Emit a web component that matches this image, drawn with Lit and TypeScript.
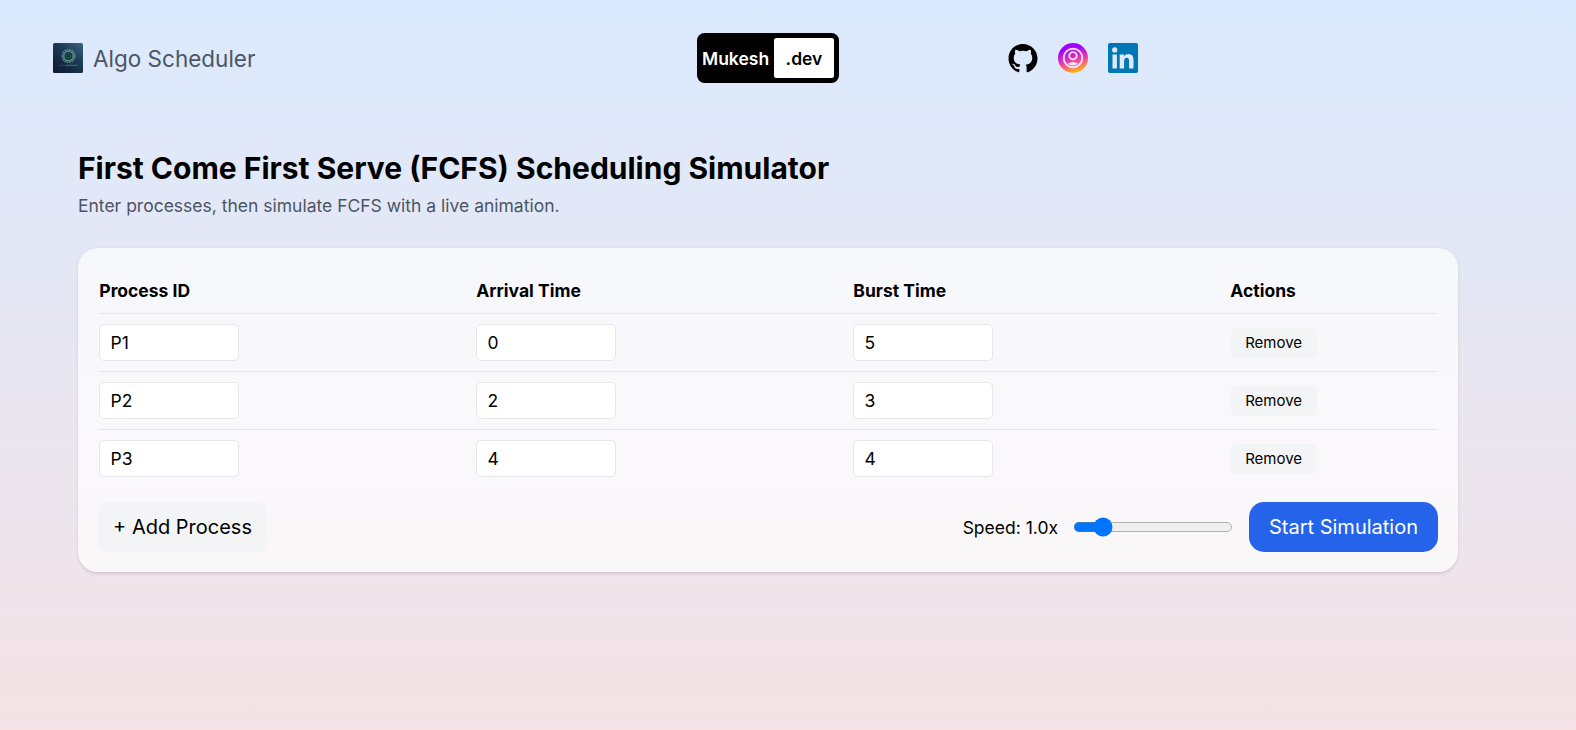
import { LitElement, html, css } from "lit";
import { customElement, state } from "lit/decorators.js";

interface Proc { id: string; arrival: number; burst: number; }

@customElement("app-header")
class AppHeader extends LitElement {
  static styles = css`
    :host { display: grid; grid-template-columns: 644px 310.5px 1fr; align-items: center; height: 50px; padding: 33px 53px 0; }
    .brand { display: flex; align-items: center; gap: 10px; font-size: 22.5px; color: #4b5563; }
    .badge { display: flex; box-sizing: border-box; width: 142px; height: 50px; padding: 5px; background: #000; border-radius: 7.5px; color: #fff; font-weight: 600; font-size: 17.5px; align-items: center; }
    .name { width: 72px; }
    .dev { flex: 1; box-sizing: border-box; height: 40px; padding-top: 1px; line-height: 40px; border-radius: 2.5px; background: #fff; color: #000; text-align: center; }
    .social { display: flex; gap: 20px; }
    svg { display: block; width: 30px; height: 30px; }
  `;
  render() {
    return html`
      <div class="brand">
        <svg viewBox="0 0 30 30">
          <defs><linearGradient id="lg" x1="1" y1="0" x2="0.2" y2="1"><stop offset="0" stop-color="#3f6482"/><stop offset=".45" stop-color="#1d3a55"/><stop offset="1" stop-color="#101b33"/></linearGradient></defs>
          <rect width="30" height="30" rx="1.6" fill="url(#lg)"/>
          <circle cx="15.5" cy="13" r="6.200" fill="none" stroke="#5b8f8c" stroke-width="1.8" stroke-dasharray="1.600 .84"/>
          <circle cx="15.5" cy="13" r="4.700" fill="#16343f" stroke="#5d938b" stroke-width="1.300"/>
          <circle cx="15.5" cy="13" r="2" fill="#0f2b33" stroke="#3f8578" stroke-width="1" stroke-dasharray="1.200 .8"/>
          <path d="M6 22.400h6" stroke="#294c5f" stroke-width=".8"/><path d="M12.500 22.400h12" stroke="#2f7a60" stroke-width="1.300" stroke-dasharray="1.400 .3"/>
        </svg>
        <span>Algo Scheduler</span>
      </div>
      <div class="badge"><span class="name">Mukesh</span><span class="dev">.dev</span></div>
      <div class="social">
        <svg viewBox="0 0 24 24"><path d="M12 .7C5.600.7.400 5.900.400 12.300c0 5.100 3.300 9.400 7.900 11 .6.100.8-.3.8-.6v-2c-3.200.7-3.900-1.600-3.900-1.600-.5-1.300-1.300-1.700-1.300-1.700-1-.7.100-.7.100-.7 1.200.1 1.800 1.200 1.800 1.200 1 1.800 2.700 1.300 3.400 1 .1-.8.400-1.300.7-1.600-2.600-.3-5.300-1.300-5.300-5.700 0-1.300.5-2.300 1.200-3.100-.1-.3-.5-1.500.1-3.100 0 0 1-.3 3.200 1.200a11 11 0 0 1 5.800 0c2.200-1.500 3.200-1.200 3.200-1.200.6 1.600.2 2.800.1 3.100.7.8 1.200 1.800 1.200 3.100 0 4.400-2.700 5.400-5.300 5.700.4.400.8 1.100.8 2.200v3.200c0 .3.200.7.800.6 4.600-1.500 7.900-5.900 7.900-11C23.600 5.900 18.400.7 12 .7z"/></svg>
        <svg viewBox="0 0 30 30">
          <defs><linearGradient id="ig" x1=".35" y1="0" x2=".65" y2="1"><stop offset=".2" stop-color="#a400ff"/><stop offset=".62" stop-color="#f0459a"/><stop offset="1" stop-color="#ffc400"/></linearGradient></defs>
          <circle cx="15" cy="15" r="15" fill="url(#ig)"/>
          <g fill="none" stroke="#fbe0fa" stroke-width="1.900"><circle cx="15" cy="15" r="9.300"/><circle cx="15" cy="12.800" r="3.700"/></g>
          <path d="M9.500 20.800q5.500-3.400 11 0-5.500 3.600-11 0z" fill="#fbe0fa"/>
        </svg>
        <svg viewBox="0 0 30 30"><rect width="30" height="30" rx="2" fill="#0077b5"/><g fill="#dfeaf8"><circle cx="6.700" cy="6.900" r="2.600"/><path d="M4.500 11.500h4.400v14H4.500zM11.700 11.500h4.200v1.900c.7-1.300 2.200-2.300 4.300-2.300 4.300 0 5.300 2.800 5.300 6.500v7.900h-4.400v-7c0-1.700-.1-3.700-2.300-3.700s-2.700 1.800-2.700 3.600v7.100h-4.400z"/></g></svg>
      </div>`;
  }
}

@customElement("app-root")
class AppRoot extends LitElement {
  @state() private procs: Proc[] = [
    { id: "P1", arrival: 0, burst: 5 },
    { id: "P2", arrival: 2, burst: 3 },
    { id: "P3", arrival: 4, burst: 4 },
  ];
  @state() private speed = 1;

  static styles = css`
    :host { display: block; box-sizing: border-box; height: 730px; overflow: hidden; font-family: Inter, sans-serif; color: #000; background: linear-gradient(to bottom, #dbeafe, #f5e3e6); }
    main { width: 1380px; margin: 65px 0 0 78px; }
    h1 { margin: 0; font-size: 30px; line-height: 40px; font-weight: 700; }
    p { margin: 5px 0 30px; font-size: 17.5px; line-height: 25px; color: #4b5563; }
    .card { box-sizing: border-box; height: 324px; padding: 20px; border-radius: 20px; background: rgba(255,255,255,.7); box-shadow: 0 1.25px 3.75px rgba(0,0,0,.1), 0 1.25px 2.5px -1.25px rgba(0,0,0,.1); }
    .row { display: grid; grid-template-columns: 377px 377px 377px 1fr; align-items: center; height: 57px; padding-left: 1px; border-bottom: 1px solid #e5e7eb; }
    .row.head { height: 45px; padding-left: 1.3px; font-size: 17.5px; font-weight: 700; }
    .row.last { border-bottom: 0; }
    .field { box-sizing: border-box; width: 140px; height: 37px; padding: 0 10px 0 10.5px; border: 1px solid #e5e7eb; border-radius: 5px; background: #fff; color: #000; font: 17.5px Inter, sans-serif; appearance: textfield; }
    button { border: 0; font-family: inherit; color: #000; background: #f3f4f6; }
    .remove { width: 86px; height: 30px; margin-left: .6px; padding: 0; font-size: 15px; border-radius: 5px; justify-self: start; }
    .actions { display: flex; align-items: center; height: 50px; margin-top: 15px; }
    .add { width: 169px; height: 50px; padding: 0; font-size: 20px; border-radius: 10px; margin-right: auto; }
    .speed { font-size: 17.5px; }
    .range { zoom: 1.25; width: 128px; height: 16px; margin: 0 12.8px 0 12px; }
    .start { width: 189px; height: 50px; padding: 0; font-size: 20px; border-radius: 15px; background: #2563eb; color: #fff; }
  `;

  private add() {
    this.procs = [...this.procs, { id: `P${this.procs.length + 1}`, arrival: 0, burst: 1 }];
  }
  private remove(i: number) {
    this.procs = this.procs.filter((_, n) => n !== i);
  }

  render() {
    return html`
      <app-header></app-header>
      <main>
        <h1>First Come First Serve (FCFS) Scheduling Simulator</h1>
        <p>Enter processes, then simulate FCFS with a live animation.</p>
        <section class="card">
          <div class="row head"><span>Process ID</span><span>Arrival Time</span><span>Burst Time</span><span>Actions</span></div>
          ${this.procs.map((p, i) => html`
            <div class="row ${i === this.procs.length - 1 ? "last" : ""}">
              <input class="field" .value=${p.id} />
              <input class="field" type="number" .value=${String(p.arrival)} />
              <input class="field" type="number" .value=${String(p.burst)} />
              <button class="remove" @click=${() => this.remove(i)}>Remove</button>
            </div>`)}
          <div class="actions">
            <button class="add" @click=${this.add}>+ Add Process</button>
            <span class="speed">Speed: ${this.speed.toFixed(1)}x</span>
            <input class="range" type="range" min="0.5" max="4" step="0.1" .value=${String(this.speed)}
              @input=${(e: Event) => (this.speed = Number((e.target as HTMLInputElement).value))} />
            <button class="start">Start Simulation</button>
          </div>
        </section>
      </main>`;
  }
}
